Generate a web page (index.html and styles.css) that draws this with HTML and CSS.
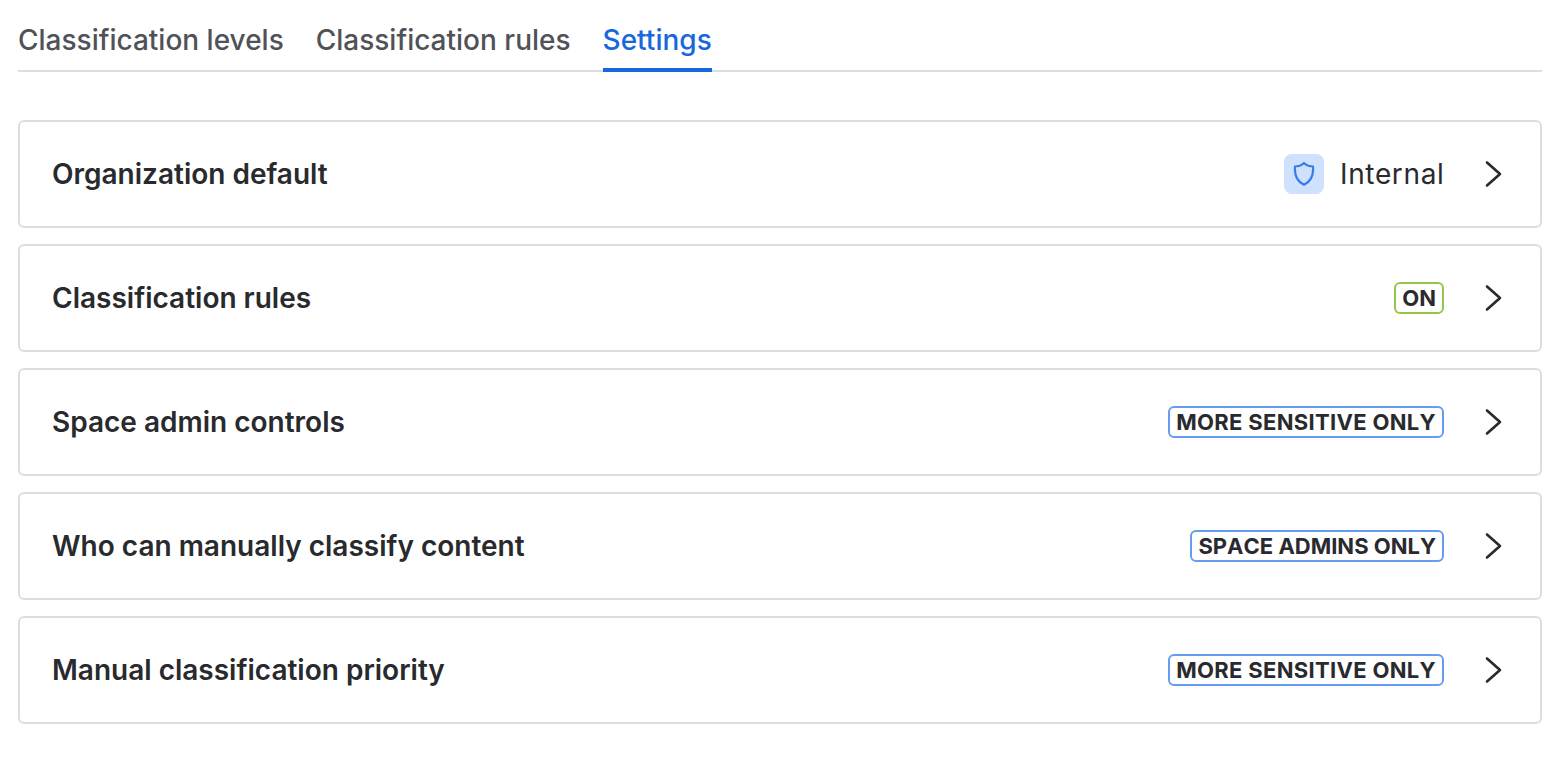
FILE: index.html
```html
<!DOCTYPE html>
<html>

<head>
    <title>Data classification settings</title>
    <meta name="viewport" content="width=device-width, initial-scale=1" />
    <link rel="stylesheet" href="styles.css">
</head>

<body>
    <div class="tabs">
        <div class="tab">Classification levels</div>
        <div class="tab">Classification rules</div>
        <div class="tab active">Settings</div>
    </div>
    <div class="content">
        <div class="row">
            <div class="row_title">Organization default</div>
            <div class="level">
                <span class="level_icon">
                    <svg width="22" height="26" viewBox="0 0 22 26" fill="none">
                        <path d="M11 2 L13.4 3.9 C14.9 4.9 16.8 5.4 20 5.5 C20.6 12.6 18.8 20 11 23.8 C3.2 20 1.4 12.6 2 5.5 C5.2 5.4 7.1 4.9 8.6 3.9 Z" stroke="#357de8" stroke-width="2.2" stroke-linejoin="round" />
                    </svg>
                </span>
                <span class="level_name">Internal</span>
            </div>
            <svg class="chevron" width="20" height="28" viewBox="0 0 20 28" fill="none">
                <path d="M3 2.5 L16 14 L3 25.5" stroke="#292a2e" stroke-width="2.6" stroke-linecap="round" stroke-linejoin="round" />
            </svg>
        </div>
        <div class="row">
            <div class="row_title">Classification rules</div>
            <span class="lozenge green">ON</span>
            <svg class="chevron" width="20" height="28" viewBox="0 0 20 28" fill="none">
                <path d="M3 2.5 L16 14 L3 25.5" stroke="#292a2e" stroke-width="2.6" stroke-linecap="round" stroke-linejoin="round" />
            </svg>
        </div>
        <div class="row">
            <div class="row_title">Space admin controls</div>
            <span class="lozenge wide">MORE SENSITIVE ONLY</span>
            <svg class="chevron" width="20" height="28" viewBox="0 0 20 28" fill="none">
                <path d="M3 2.5 L16 14 L3 25.5" stroke="#292a2e" stroke-width="2.6" stroke-linecap="round" stroke-linejoin="round" />
            </svg>
        </div>
        <div class="row">
            <div class="row_title">Who can manually classify content</div>
            <span class="lozenge">SPACE ADMINS ONLY</span>
            <svg class="chevron" width="20" height="28" viewBox="0 0 20 28" fill="none">
                <path d="M3 2.5 L16 14 L3 25.5" stroke="#292a2e" stroke-width="2.6" stroke-linecap="round" stroke-linejoin="round" />
            </svg>
        </div>
        <div class="row">
            <div class="row_title">Manual classification priority</div>
            <span class="lozenge wide">MORE SENSITIVE ONLY</span>
            <svg class="chevron" width="20" height="28" viewBox="0 0 20 28" fill="none">
                <path d="M3 2.5 L16 14 L3 25.5" stroke="#292a2e" stroke-width="2.6" stroke-linecap="round" stroke-linejoin="round" />
            </svg>
        </div>
    </div>
</body>

</html>
```

FILE: styles.css
```css
html {
    font-family: Inter, "Liberation Sans", sans-serif;
    background-color: white;
}

body {
    margin: 0;
    padding: 8px 24px 0 18px;
    color: #292a2e;
}

.tabs {
    display: flex;
    gap: 32px;
    height: 64px;
    box-sizing: border-box;
    border-bottom: 2px solid #dddee1;
}

.tab {
    height: 64px;
    box-sizing: border-box;
    padding-top: 14px;
    font-size: 28px;
    line-height: 36px;
    font-weight: 500;
    color: #505258;
}

.tab.active {
    color: #1868db;
    border-bottom: 4px solid #1868db;
}

.content {
    display: flex;
    flex-direction: column;
    gap: 16px;
    margin-top: 48px;
}

.row {
    display: flex;
    align-items: center;
    height: 108px;
    box-sizing: border-box;
    padding: 0 36px 0 32px;
    border: 2px solid #dddee1;
    border-radius: 6px;
}

.row_title {
    flex: 1;
    font-size: 28px;
    line-height: 36px;
    font-weight: 600;
}

.level {
    display: flex;
    align-items: center;
    gap: 16px;
}

.level_icon {
    display: flex;
    align-items: center;
    justify-content: center;
    width: 40px;
    height: 40px;
    border-radius: 8px;
    background-color: #cfe1fd;
}

.level_name {
    font-size: 28px;
    line-height: 36px;
    letter-spacing: 0.65px;
    margin-right: -0.5px;
}

.lozenge {
    box-sizing: border-box;
    height: 32px;
    padding: 0 6px;
    border: 2px solid #669df1;
    border-radius: 6px;
    font-size: 22px;
    line-height: 29px;
    font-weight: 700;
    font-kerning: none;
}

.lozenge.wide {
    letter-spacing: 0.32px;
}

.lozenge.green {
    border-color: #94c748;
}

.chevron {
    margin-left: 40px;
}
```
